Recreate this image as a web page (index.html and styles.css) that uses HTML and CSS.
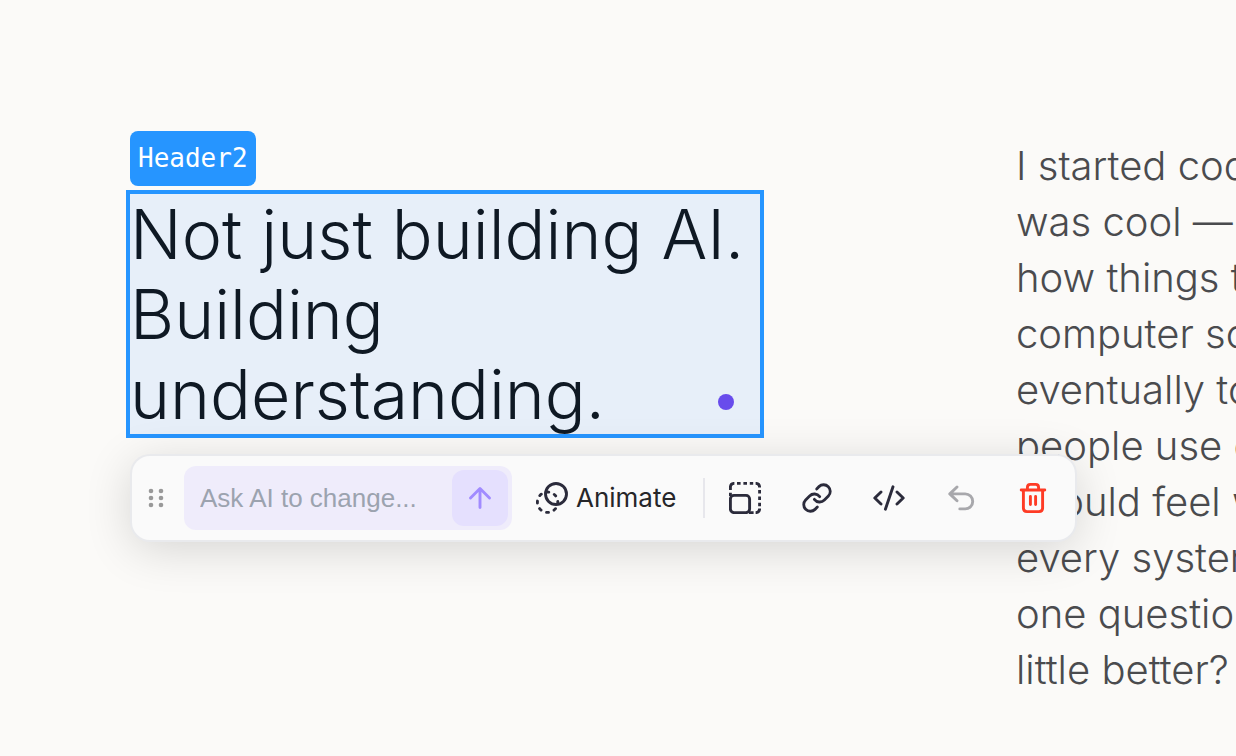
FILE: index.html
```html
<!DOCTYPE html>
<html lang="en">
<head>
<meta charset="utf-8">
<meta name="viewport" content="width=device-width, initial-scale=1">
<title>Page editor</title>
<link rel="stylesheet" href="styles.css">
</head>
<body>
<main class="page">
  <section class="lead">
    <span class="tag">Header2</span>
    <div class="selection">
      <h2 class="headline">Not just building AI.<br>Building<br>understanding.</h2>
      <span class="marker"></span>
      <div class="toolbar" role="toolbar" aria-label="Element actions">
        <button class="handle" type="button" aria-label="Move">
          <svg class="icon" viewBox="0 0 32 32">
            <circle cx="11" cy="9" r="2.3"/><circle cx="21" cy="9" r="2.3"/>
            <circle cx="11" cy="16" r="2.3"/><circle cx="21" cy="16" r="2.3"/>
            <circle cx="11" cy="23" r="2.3"/><circle cx="21" cy="23" r="2.3"/>
          </svg>
        </button>
        <form class="prompt">
          <input class="prompt-input" type="text" placeholder="Ask AI to change..." aria-label="Ask AI to change">
          <button class="send" type="button" aria-label="Send">
            <svg class="icon line" viewBox="0 0 32 32"><path d="M16 25.500V7M6.500 16 16 6.500l9.500 9.500"/></svg>
          </button>
        </form>
        <button class="animate" type="button">
          <svg class="icon line" viewBox="0 0 32 32">
            <circle cx="20" cy="12" r="10.5"/>
            <circle cx="11.6" cy="20.2" r="10.2" stroke-dasharray="2 6" stroke-dashoffset="1"/>
          </svg>
          Animate
        </button>
        <span class="divider"></span>
        <button class="tool" type="button" aria-label="Resize">
          <svg class="icon line" viewBox="0 0 32 32">
            <rect x="1.4" y="13.4" width="19.2" height="17.2" rx="3.600"/>
            <path stroke-linecap="butt" d="M1.4 14v-3.200M1.4 8V5.400q0-4 4-4M8 1.400h3.600M14.400 1.400h3.600M20.800 1.400h3.400M26.600 1.400q4 0 4 4M30.600 8v3.600M30.600 14.400v3.600M30.600 20.800v3.400M30.600 26.600q0 4-4 4M24.600 30.600h-4.600"/>
          </svg>
        </button>
        <button class="tool" type="button" aria-label="Link">
          <svg class="icon line link" viewBox="0 0 24 24">
            <path d="M10 13a5 5 0 0 0 7.540.54l3-3a5 5 0 0 0-7.070-7.070l-1.720 1.710"/>
            <path d="M14 11a5 5 0 0 0-7.540-.54l-3 3a5 5 0 0 0 7.070 7.070l1.710-1.710"/>
          </svg>
        </button>
        <button class="tool" type="button" aria-label="Edit code">
          <svg class="icon line" viewBox="0 0 32 32"><path d="M8 10 1.800 16 8 22M24 10l6.200 6L24 22M20 4.800l-7.600 22.400"/></svg>
        </button>
        <button class="tool muted" type="button" aria-label="Undo">
          <svg class="icon line" viewBox="0 0 32 32"><path d="M12 5 4.800 11.900 12 18.800M5 11.900h15.200a7.500 7.500 0 0 1 0 15H14.800"/></svg>
        </button>
        <button class="tool danger" type="button" aria-label="Delete">
          <svg class="icon line" viewBox="0 0 32 32"><path d="M4.200 8h23.600M10.400 8V5.400q0-3 3-3h5.200q3 0 3 3V8M6.400 8v18q0 3.600 3.600 3.600h12q3.600 0 3.600-3.600V8M13.400 14.500v8M18.600 14.500v8"/></svg>
        </button>
      </div>
    </div>
  </section>
  <p class="story">I started coding<br>was cool — <br>how things turned<br>computer so<br>eventually to<br>people use every<br>should feel was<br>every system<br>one question<br>little better?</p>
</main>
</body>
</html>
```
FILE: styles.css
```css
* { box-sizing: border-box; }

body {
  margin: 0;
  background: #fbfaf8;
  font-family: Inter, "Liberation Sans", sans-serif;
}

button, input { font: inherit; border: 0; background: none; padding: 0; }

.page {
  display: grid;
  grid-template-columns: 630px minmax(0, 1fr);
  column-gap: 256px;
  min-height: 100vh;
  padding: 131px 0 56px 130px;
  overflow: hidden;
}

.lead {
  display: flex;
  flex-direction: column;
  align-items: flex-start;
  gap: 8px;
}

.tag {
  padding: 0 8px;
  border-radius: 8px;
  background: #2695ff;
  color: #ffffff;
  font: 26px/55px "DejaVu Sans Mono", monospace;
}

.selection {
  position: relative;
  align-self: stretch;
  background: #e7eff9;
}

.selection::after {
  content: "";
  position: absolute;
  inset: -4px;
  border: 4px solid #2695ff;
  pointer-events: none;
}

.headline {
  margin: 0;
  color: #0f1924;
  font-size: 68px;
  font-weight: 300;
  line-height: 80px;
  white-space: nowrap;
}

.marker {
  position: absolute;
  right: 26px;
  bottom: 24px;
  width: 16px;
  height: 16px;
  border-radius: 50%;
  background: #684cec;
}

.toolbar {
  position: absolute;
  z-index: 2;
  top: calc(100% + 22px);
  left: 2px;
  display: flex;
  align-items: center;
  gap: 8px;
  padding: 10px 10px 10px 8px;
  border-radius: 18px;
  background: #fafafa;
  box-shadow: 0 0 0 2px #e9eaed, 0 8px 48px rgba(0, 0, 0, 0.16);
  color: #2b2b3b;
}

.icon { display: block; width: 32px; height: 32px; flex: none; }

.line {
  fill: none;
  stroke: currentColor;
  stroke-width: 2.9;
  stroke-linecap: round;
  stroke-linejoin: round;
}

.link { stroke-width: 2.1; }

.handle { margin-right: 4px; fill: #999999; }

.prompt {
  display: flex;
  align-items: center;
  width: 328px;
  height: 64px;
  padding: 4px;
  border-radius: 12px;
  background: #efecfb;
}

.prompt-input {
  flex: 1;
  min-width: 0;
  padding-left: 12px;
  font: 26px/32px "Liberation Sans", Arial, sans-serif;
  color: #2b2b3b;
}

.prompt-input::placeholder { color: #9ca3af; opacity: 1; }

.send {
  display: grid;
  place-items: center;
  width: 56px;
  height: 56px;
  border-radius: 12px;
  background: #e5e0fe;
  color: #a18bff;
}

.animate {
  display: flex;
  align-items: center;
  gap: 8px;
  height: 64px;
  padding: 0 19px 0 16px;
  color: #262629;
  font-size: 26px;
  line-height: 32px;
}

.animate .icon { color: #2b2b3b; }

.divider { width: 2px; height: 40px; background: #e7e7ec; }

.tool {
  display: grid;
  place-items: center;
  width: 64px;
  height: 64px;
  color: #2b2b3b;
}

.muted { color: #a8a8ac; }
.danger { color: #fe3b25; }

.story {
  margin: 7px 0 0;
  color: #4a4b4e;
  font-size: 40px;
  font-weight: 300;
  line-height: 56px;
  white-space: nowrap;
}
```
